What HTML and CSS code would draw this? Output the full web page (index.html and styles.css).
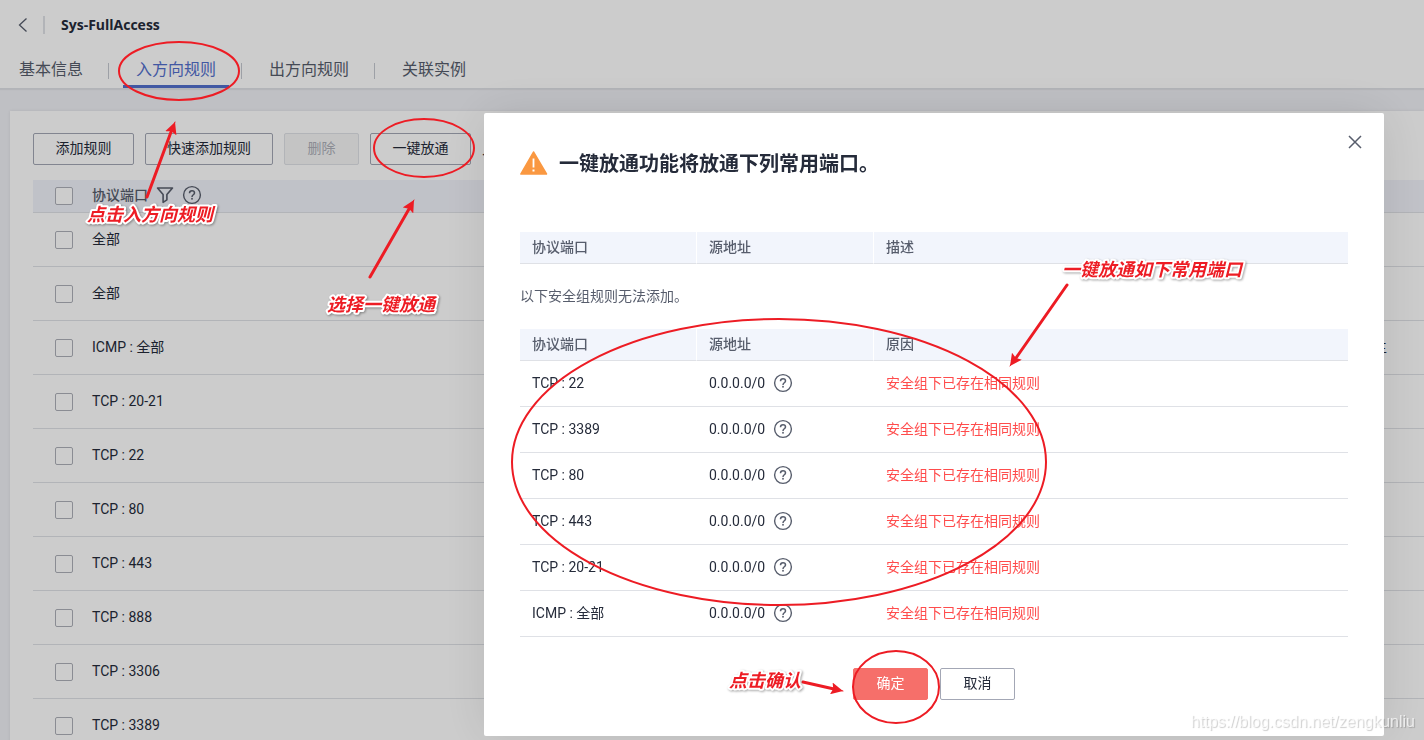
FILE: index.html
```html
<!DOCTYPE html>
<html lang="zh-CN">
<head>
<meta charset="utf-8">
<title>Sys-FullAccess</title>
<link rel="stylesheet" href="styles.css">
</head>
<body>
<svg class="defs" aria-hidden="true">
  <symbol id="help" viewBox="0 0 20 20">
    <circle cx="10" cy="10" r="8.4" fill="none" stroke="currentColor" stroke-width="1.4"/>
    <path d="M7.5 8.2C7.5 6.6 8.6 5.7 10 5.7s2.5.9 2.5 2.2c0 1.9-2.5 1.9-2.5 4" fill="none" stroke="currentColor" stroke-width="1.5"/>
    <rect x="9.2" y="12.9" width="1.6" height="1.7" fill="currentColor"/>
  </symbol>
</svg>

<header class="top">
  <div class="crumb">
    <button class="back" type="button" aria-label="返回"><svg width="10" height="16" viewBox="0 0 10 16"><path d="M8.5 1.5L1.5 8l7 6.5" fill="none" stroke="currentColor" stroke-width="1.3"/></svg></button>
    <span class="bar"></span>
    <h1>Sys-FullAccess</h1>
  </div>
  <nav class="tabs">
    <a href="#info">基本信息</a>
    <a href="#in" class="on">入方向规则</a>
    <a href="#out">出方向规则</a>
    <a href="#ref">关联实例</a>
  </nav>
</header>

<main class="card">
  <div class="tools">
    <button class="btn w-m" type="button">添加规则</button>
    <button class="btn w-l" type="button">快速添加规则</button>
    <button class="btn w-s" type="button" disabled>删除</button>
    <button class="btn w-m" type="button">一键放通</button>
    <span>入</span>
  </div>
  <table class="rules">
    <thead>
      <tr><th class="pick"><input type="checkbox" aria-label="全选"></th>
        <th><div class="cell"><span>协议端口</span>
          <svg class="filter" width="18" height="18" viewBox="0 0 18 18"><path d="M1.5 2h15l-5.6 6.6v5.2L7.1 16.300V8.600z" fill="none" stroke="currentColor" stroke-width="1.600" stroke-linejoin="round"/></svg>
          <svg class="help" width="20" height="20"><use href="#help"/></svg></div></th><th class="last"></th></tr>
    </thead>
    <tbody>
      <tr><td class="pick"><input type="checkbox" aria-label="全部"></td><td>全部</td><td></td></tr>
      <tr><td class="pick"><input type="checkbox" aria-label="全部"></td><td>全部</td><td></td></tr>
      <tr><td class="pick"><input type="checkbox" aria-label="ICMP : 全部"></td><td>ICMP : 全部</td><td class="last">主</td></tr>
      <tr><td class="pick"><input type="checkbox" aria-label="TCP : 20-21"></td><td>TCP : 20-21</td><td></td></tr>
      <tr><td class="pick"><input type="checkbox" aria-label="TCP : 22"></td><td>TCP : 22</td><td></td></tr>
      <tr><td class="pick"><input type="checkbox" aria-label="TCP : 80"></td><td>TCP : 80</td><td></td></tr>
      <tr><td class="pick"><input type="checkbox" aria-label="TCP : 443"></td><td>TCP : 443</td><td></td></tr>
      <tr><td class="pick"><input type="checkbox" aria-label="TCP : 888"></td><td>TCP : 888</td><td></td></tr>
      <tr><td class="pick"><input type="checkbox" aria-label="TCP : 3306"></td><td>TCP : 3306</td><td></td></tr>
      <tr><td class="pick"><input type="checkbox" aria-label="TCP : 3389"></td><td>TCP : 3389</td><td></td></tr>
    </tbody>
  </table>
</main>

<div class="mask">
  <section class="modal" role="dialog" aria-labelledby="dlg-title">
    <button class="close" type="button" aria-label="关闭"><svg width="14" height="14" viewBox="0 0 14 14"><path d="M1 1l12 12M13 1L1 13" stroke="currentColor" stroke-width="1.500"/></svg></button>
    <div class="title">
      <svg width="28" height="24" viewBox="0 0 28 24"><path d="M13.500 1L26.500 23H.8z" fill="#fa9841" stroke="#fa9841" stroke-width="1.500" stroke-linejoin="round"/><path d="M13.500 7.500v9" stroke="#fff" stroke-width="1.800"/><rect x="12.500" y="18.500" width="2" height="2" fill="#fff"/></svg>
      <h2 id="dlg-title">一键放通功能将放通下列常用端口。</h2>
    </div>
    <table class="ports">
      <thead><tr><th>协议端口</th><th>源地址</th><th class="rest">描述</th></tr></thead>
    </table>
    <p>以下安全组规则无法添加。</p>
    <table class="ports">
      <thead><tr><th>协议端口</th><th>源地址</th><th class="rest">原因</th></tr></thead>
      <tbody>
        <tr><td>TCP : 22</td><td><div class="cell">0.0.0.0/0<svg class="help" width="20" height="20"><use href="#help"/></svg></div></td><td class="err">安全组下已存在相同规则</td></tr>
        <tr><td>TCP : 3389</td><td><div class="cell">0.0.0.0/0<svg class="help" width="20" height="20"><use href="#help"/></svg></div></td><td class="err">安全组下已存在相同规则</td></tr>
        <tr><td>TCP : 80</td><td><div class="cell">0.0.0.0/0<svg class="help" width="20" height="20"><use href="#help"/></svg></div></td><td class="err">安全组下已存在相同规则</td></tr>
        <tr><td>TCP : 443</td><td><div class="cell">0.0.0.0/0<svg class="help" width="20" height="20"><use href="#help"/></svg></div></td><td class="err">安全组下已存在相同规则</td></tr>
        <tr><td>TCP : 20-21</td><td><div class="cell">0.0.0.0/0<svg class="help" width="20" height="20"><use href="#help"/></svg></div></td><td class="err">安全组下已存在相同规则</td></tr>
        <tr><td>ICMP : 全部</td><td><div class="cell">0.0.0.0/0<svg class="help" width="20" height="20"><use href="#help"/></svg></div></td><td class="err">安全组下已存在相同规则</td></tr>
      </tbody>
    </table>
    <div class="actions">
      <button class="btn w-s primary" type="button">确定</button>
      <button class="btn w-s" type="button">取消</button>
    </div>
  </section>
</div>

<svg class="notes" width="1424" height="740">
  <defs>
    <marker id="head" markerUnits="userSpaceOnUse" markerWidth="14" markerHeight="12" refX="12" refY="6" orient="auto"><path d="M0 0L12 6 0 12 2 6z" fill="#ed1c24"/></marker>
  </defs>
  <g class="ring">
    <ellipse cx="179" cy="71" rx="60" ry="29"/>
    <ellipse cx="424" cy="148" rx="50" ry="29"/>
    <ellipse cx="779" cy="462" rx="267" ry="143"/>
    <ellipse cx="896" cy="687" rx="43" ry="36"/>
  </g>
  <g class="arrow">
    <path d="M147 197L171 132"/><path class="tip" d="M147 197L175 122"/>
    <path d="M370 277L409 209"/><path class="tip" d="M370 277L414 200"/>
    <path d="M1067 285L1016 358"/><path class="tip" d="M1067 285L1010 366"/>
    <path d="M803 682L834 689"/><path class="tip" d="M803 682L843 691"/>
  </g>
  <g class="label">
    <text x="87" y="221">点击入方向规则</text>
    <text x="327" y="311">选择一键放通</text>
    <text x="1062" y="276">一键放通如下常用端口</text>
    <text x="729" y="687">点击确认</text>
  </g>
</svg>
<div class="mark">https://blog.csdn.net/zengkunliu</div>
</body>
</html>
```

FILE: styles.css
```css
* { box-sizing: border-box; }
body {
  margin: 0;
  height: 100vh;
  overflow: hidden;
  position: relative;
  background: #eff0f5;
  color: #252b3a;
  font: 400 14px/20px Roboto, "Noto Sans CJK SC", sans-serif;
}
h1, h2, p { margin: 0; }
button { font: inherit; color: inherit; cursor: pointer; }
a { color: inherit; text-decoration: none; }
.defs { display: none; }
svg { display: block; flex: none; }

.top { height: 89px; background: #fff; border-bottom: 1px solid #dfe1e6; box-shadow: 0 1px 1px rgba(0, 0, 0, .05); }
.crumb { display: flex; align-items: center; height: 50px; padding-left: 18px; }
.back, .close { padding: 0; border: 0; background: none; color: #575d6c; }
.bar { width: 2px; height: 18px; margin: 0 16px 0 15px; background: #dfe1e6; }
h1 { font: 700 14px/20px "Open Sans", "Noto Sans", sans-serif; }
.tabs { display: flex; height: 38px; padding-left: 6px; font-size: 16px; line-height: 24px; color: #575d6c; }
.tabs a { position: relative; height: 38px; padding: 8px 13px; margin-right: 27px; }
.tabs a + a::before { content: ""; position: absolute; left: -15px; top: 13px; width: 1px; height: 16px; background: #c5c8d0; }
.tabs .on { color: #526ecc; border-bottom: 3px solid #526ecc; }

.card { margin: 22px 0 0 10px; padding: 22px 0 0 23px; background: #fff; box-shadow: 0 0 3px rgba(0, 0, 0, .08); }
.tools { display: flex; align-items: center; gap: 11px; margin-bottom: 15px; }
.btn { height: 32px; padding: 0 0 2px; border: 1px solid #a3a7b5; border-radius: 2px; background: #fff; }
.btn:disabled { border-color: #dfe1e6; background: #f5f5f6; color: #adb0b8; }
.w-s { width: 75px; }
.w-m { width: 101px; }
.w-l { width: 128px; }

table { width: 100%; border-collapse: separate; border-spacing: 0; table-layout: fixed; }
th { height: 33px; padding: 0 0 2px; text-align: left; font-weight: 500; color: #575d6c; background: #f1f3fa; border-bottom: 1px solid #dfe1e6; }
td { padding: 0 0 2px; border-bottom: 1px solid #dfe1e6; }
.cell { display: flex; align-items: center; gap: 8px; }
.help { color: #575d6c; }
.rules td { height: 54px; }
.rules .pick { width: 59px; padding: 0 0 0 22px; }
.rules .last { width: 51px; }
input { appearance: none; display: block; width: 18px; height: 18px; margin: 0; border: 1px solid #adb0b8; border-radius: 2px; background: #fff; }

.mask { position: fixed; inset: 0; display: flex; justify-content: flex-end; align-items: flex-start; padding: 113px 40px 0; background: rgba(0, 0, 0, .2); }
.modal { position: relative; width: 900px; padding: 34px 36px 36px; border-radius: 2px; background: #fff; box-shadow: 0 0 50px rgba(0, 0, 0, .1); }
.close { position: absolute; top: 22px; right: 22px; }
.title { display: flex; align-items: center; gap: 11px; height: 32px; margin-bottom: 53px; }
h2 { font-size: 20px; line-height: 32px; font-weight: 700; padding-top: 2px; }
.ports th { height: 32px; width: 177px; padding-left: 12px; border-right: 1px solid #fff; background: #f2f5fc; }
.ports .rest { width: auto; border-right: 0; }
.ports td { height: 46px; padding-left: 12px; }
.modal p { margin: 22px 0 23px; color: #575d6c; }
.ports .err { color: #ff4c4c; }
.actions { display: flex; justify-content: center; gap: 12px; margin-top: 31px; }
.primary { border-color: #f66f6a; background: #f66f6a; color: #fff; }

.notes { position: absolute; left: 0; top: 0; pointer-events: none; }
.ring { fill: none; stroke: #ed1c24; stroke-width: 2; }
.arrow { fill: none; stroke: #ed1c24; stroke-width: 3; stroke-linecap: round; }
.arrow .tip { stroke-width: 1; marker-end: url(#head); }
.label { font: italic 700 18px "Noto Sans CJK SC", sans-serif; fill: #ed1c24; stroke: #fff; stroke-width: 4; stroke-linejoin: round; paint-order: stroke; filter: drop-shadow(1px 1px 1px rgba(0, 0, 0, .35)); }
.mark { position: absolute; right: 9px; bottom: 8px; font: 16px/20px "Liberation Sans", Arial, sans-serif; color: rgba(255, 255, 255, .7); text-shadow: 1px 1px 1px rgba(0, 0, 0, .2); }
```
